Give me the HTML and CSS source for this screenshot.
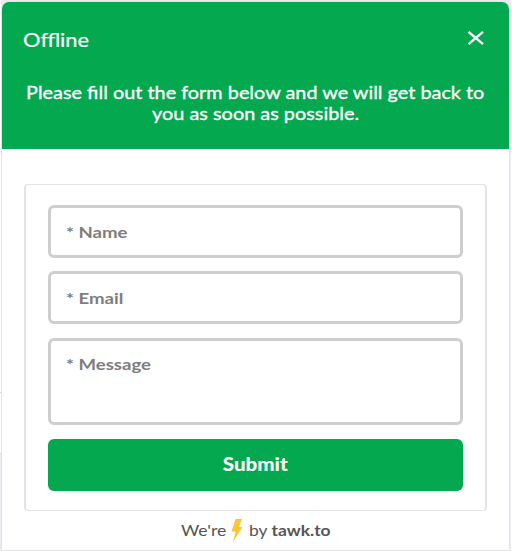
FILE: index.html
```
<!DOCTYPE html>
<html lang="en">
<head>
<meta charset="utf-8">
<title>Offline</title>
<link rel="stylesheet" href="styles.css">
</head>
<body>
<main class="widget">
  <header class="header">
    <div class="bar">
      <h1 class="title"><span class="wide">Offline</span></h1>
      <svg class="close" viewBox="0 0 18 16" aria-label="Close"><path d="M1.500 1.800 16 14.200M16 1.800 1.500 14.200"/></svg>
    </div>
    <p class="intro"><span class="wide">Please fill out the form below and we will get back to</span><span class="wide">you as soon as possible.</span></p>
  </header>
  <form class="form">
    <div class="field"><span class="wide">* Name</span></div>
    <div class="field"><span class="wide">* Email</span></div>
    <div class="field message"><span class="wide">* Message</span></div>
    <div class="submit"><span class="wide">Submit</span></div>
  </form>
  <footer class="footer">
    <span class="wide we">We're</span>
    <svg class="bolt" viewBox="0 0 12 23"><path d="M4.500 0H11L8 8H11.500L2 23 4.700 12.500H.5Z"/></svg>
    <span class="wide by">by <b>tawk.to</b></span>
  </footer>
</main>
</body>
</html>
```
FILE: styles.css
```
* { box-sizing: border-box; }
body {
  margin: 0;
  height: 551px;
  padding: 1px 2px 0 1px;
  overflow: hidden;
  background:
    linear-gradient(to bottom, #fff 392px, #dcdce0 392px, #dcdce0 393px, #fff 393px, #fff 453px, #d5d8de 453px, #d5d8de 454px, #e9ebf0 454px) 0 0 / 1px 100% no-repeat,
    linear-gradient(#fff, #fff) 100% 0 / 1px 100% no-repeat,
    #ebebf1;
  font-family: Lato, sans-serif;
}
.widget {
  height: 550px;
  border: 1px solid #e4e4e6;
  border-radius: 8px 8px 0 0;
  background: #fff;
  display: flex;
  flex-direction: column;
  overflow: hidden;
}
.wide {
  display: inline-block;
  white-space: nowrap;
  transform: scaleX(1.18);
  transform-origin: 0 50%;
}
.header {
  height: 147px;
  background: #04a84e;
  color: #fff;
}
.bar {
  display: flex;
  justify-content: space-between;
  padding: 26px 24px 0 21px;
  height: 80px;
}
.title {
  margin: 0;
  font-size: 18.500px;
  line-height: 24px;
  font-weight: 400;
  -webkit-text-stroke: .2px #fff;
}
.close {
  width: 18px;
  height: 16px;
  margin-top: 2px;
  fill: none;
  stroke: #fff;
  stroke-width: 2.400;
}
.intro {
  margin: 0;
  display: flex;
  flex-direction: column;
  align-items: center;
  font-size: 17px;
  line-height: 21px;
  -webkit-text-stroke: .3px #fff;
}
.intro .wide { transform: scaleX(1.168); transform-origin: 50% 50%; }
.form {
  margin: 35px 22px 0;
  height: 327px;
  padding: 20px 22px 0;
  border: solid #e4e4e4;
  border-width: 1px 2px;
  border-radius: 4px;
}
.field {
  height: 53px;
  margin-bottom: 13px;
  padding: 14px 15px;
  border: 3px solid #cecece;
  border-radius: 6px;
  color: #7d7d7d;
  font-size: 15px;
  font-weight: 700;
  line-height: 20px;
}
.field .wide { transform: scaleX(1.24); }
.message { height: 87px; margin: 14px 0; padding-top: 13px; }
.submit {
  height: 52px;
  border-radius: 6px;
  background: #04a84e;
  color: #fff;
  font-size: 18.500px;
  font-weight: 900;
  line-height: 51px;
  text-align: center;
}
.submit .wide { transform: scaleX(1.11); transform-origin: 50% 50%; }
.footer {
  display: flex;
  padding: 8px 0 0 179px;
  height: 39px;
  color: #555;
  font-size: 15px;
  line-height: 22px;
}
.we { width: 50px; }
.bolt { width: 12px; height: 23px; fill: #fdc62f; margin-right: 6px; }
.by { transform: scaleX(1.16); }
```
